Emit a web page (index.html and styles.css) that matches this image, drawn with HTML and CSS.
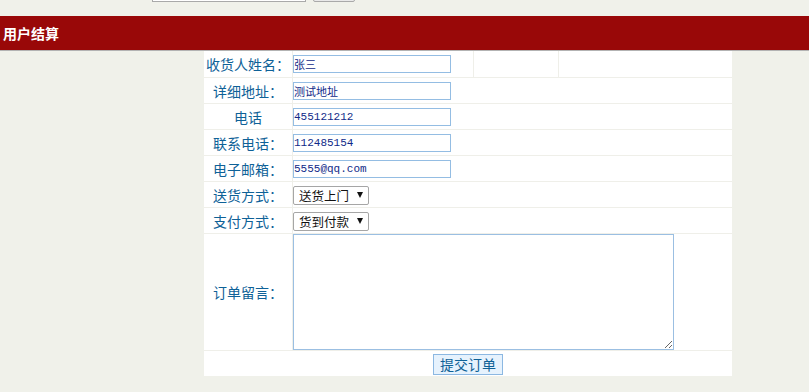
FILE: index.html
```html
<!DOCTYPE html>
<html lang="zh-CN">
<head>
    <meta charset="UTF-8">
    <meta name="viewport" content="width=device-width, initial-scale=1.0">
    <title>用户结算</title>
    <link rel="stylesheet" href="styles.css">
</head>
<body>
    <div class="topbar">
        <input class="search-input" type="text">
        <button class="search-button" type="button" aria-label="搜索"></button>
    </div>

    <div class="title-bar">用户结算</div>

    <form class="order-form" action="#" method="post">
        <table class="order-table">
            <tr class="first-row">
                <td class="label">收货人姓名：</td>
                <td class="field field-short"><input class="text-input" type="text" value="张三"></td>
                <td class="blank blank-mid"></td>
                <td class="blank"></td>
            </tr>
            <tr>
                <td class="label">详细地址：</td>
                <td class="field" colspan="3"><input class="text-input" type="text" value="测试地址"></td>
            </tr>
            <tr>
                <td class="label">电话</td>
                <td class="field" colspan="3"><input class="text-input" type="text" value="455121212"></td>
            </tr>
            <tr>
                <td class="label">联系电话：</td>
                <td class="field" colspan="3"><input class="text-input" type="text" value="112485154"></td>
            </tr>
            <tr>
                <td class="label">电子邮箱：</td>
                <td class="field" colspan="3"><input class="text-input" type="text" value="5555@qq.com"></td>
            </tr>
            <tr>
                <td class="label">送货方式：</td>
                <td class="field" colspan="3">
                    <span class="select-wrap">
                        <select class="select-box" name="delivery">
                            <option>送货上门</option>
                            <option>自提</option>
                        </select>
                    </span>
                </td>
            </tr>
            <tr>
                <td class="label">支付方式：</td>
                <td class="field" colspan="3">
                    <span class="select-wrap">
                        <select class="select-box" name="payment">
                            <option>货到付款</option>
                            <option>在线支付</option>
                        </select>
                    </span>
                </td>
            </tr>
            <tr class="memo-row">
                <td class="label">订单留言：</td>
                <td class="field" colspan="3"><textarea class="memo" name="memo"></textarea></td>
            </tr>
            <tr class="submit-row">
                <td class="submit-cell" colspan="4"><button class="submit-button" type="submit">提交订单</button></td>
            </tr>
        </table>
    </form>
</body>
</html>
```

FILE: styles.css
```css
body {
    margin: 0;
    background-color: #f0f1ea;
    font-family: "Noto Sans CJK SC", "Liberation Sans", sans-serif;
    font-size: 14px;
}

.topbar {
    height: 16px;
    display: flex;
    align-items: flex-start;
    padding-left: 152px;
    gap: 7px;
    overflow: hidden;
}

.search-input {
    box-sizing: border-box;
    width: 154px;
    height: 20px;
    margin: -18px 0 0 0;
    border: 1px solid #a9a9a9;
    background: #fff;
}

.search-button {
    box-sizing: border-box;
    width: 42px;
    height: 20px;
    margin: -18px 0 0 0;
    border: 1px solid #a9a9a9;
    border-radius: 2px;
    background: #e9e9e9;
}

.title-bar {
    height: 34px;
    line-height: 34px;
    padding-left: 3px;
    background-color: #990808;
    border-bottom: 1px solid #b3b3b3;
    color: #fff;
    font-weight: bold;
    font-size: 14px;
}

.order-form {
    margin: 0 0 0 204px;
    width: 528px;
}

.order-table {
    width: 528px;
    border-collapse: collapse;
    background-color: #fff;
}

.order-table td {
    padding: 0;
    height: 25px;
    border-bottom: 1px solid #efefe9;
    vertical-align: middle;
}

.order-table .first-row td {
    height: 26px;
}

.order-table .label {
    width: 88px;
    border-right: 1px solid #efefe9;
    text-align: center;
    color: #0e6197;
    font-size: 14px;
    white-space: nowrap;
}

.field-short {
    width: 180px;
    border-right: 1px solid #efefe9;
}

.blank-mid {
    width: 84px;
    border-right: 1px solid #efefe9;
}

.text-input {
    box-sizing: border-box;
    display: block;
    width: 158px;
    height: 18px;
    margin: 0;
    padding: 0;
    border: 1px solid #94bde3;
    color: #102a88;
    font-family: "Liberation Mono", "Noto Sans CJK SC", monospace;
    font-size: 11px;
    outline: none;
}

.select-wrap {
    position: relative;
    display: inline-block;
    vertical-align: middle;
}

.select-wrap::after {
    content: "";
    position: absolute;
    right: 6px;
    top: 6px;
    width: 0;
    height: 0;
    border-left: 3px solid transparent;
    border-right: 3px solid transparent;
    border-top: 6px solid #111;
    pointer-events: none;
}

.select-box {
    -webkit-appearance: none;
    appearance: none;
    box-sizing: border-box;
    display: block;
    width: 76px;
    height: 19px;
    margin: 0;
    padding: 0 0 0 5px;
    border: 1px solid #a6a6a6;
    border-radius: 2px;
    background: #fff;
    color: #111;
    font-family: "Noto Sans CJK SC", sans-serif;
    font-size: 12.5px;
    line-height: 17px;
}

.memo-row td {
    height: 116px;
    vertical-align: top;
}

.memo-row .label {
    vertical-align: middle;
}

.memo {
    box-sizing: border-box;
    display: block;
    width: 381px;
    height: 116px;
    margin: 0;
    border: 1px solid #9bbfe2;
    outline: none;
}

.submit-row td {
    border-bottom: none;
}

.submit-cell {
    text-align: center;
}

.submit-button {
    box-sizing: border-box;
    height: 21px;
    padding: 0 6px;
    border: 1px solid #8cb8e2;
    background-color: #e6f2fd;
    color: #0e6197;
    font-family: "Noto Sans CJK SC", sans-serif;
    font-size: 14px;
    line-height: 19px;
    vertical-align: middle;
}
```
